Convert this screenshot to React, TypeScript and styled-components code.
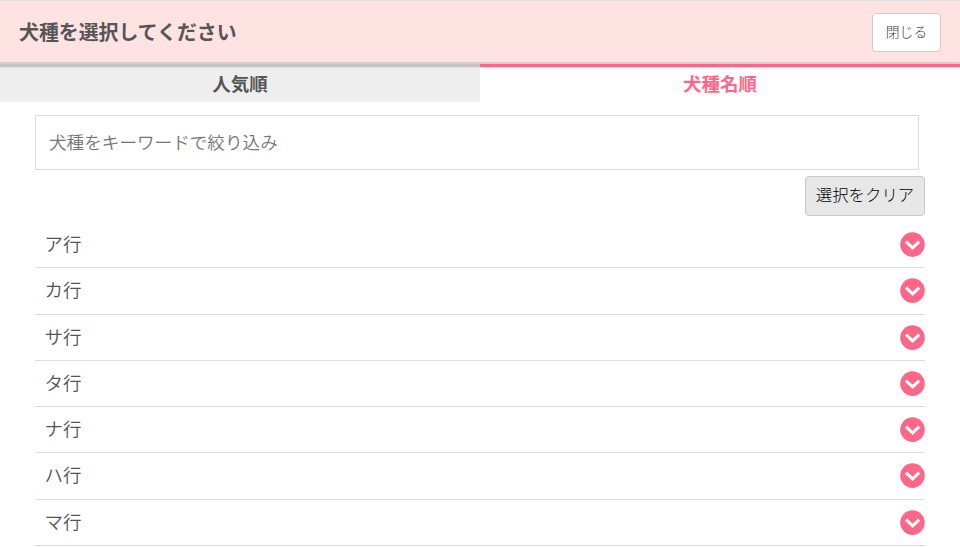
import React from "react";
import styled, { createGlobalStyle } from "styled-components";

const GlobalStyle = createGlobalStyle`
  *, *::before, *::after { box-sizing: border-box; }
  body {
    margin: 0;
    overflow: hidden;
    background: #fff;
    color: #555;
    font-family: "Noto Sans CJK JP", sans-serif;
  }
  button, input { font-family: inherit; margin: 0; }
`;

const Page = styled.div`
  height: 547px;
  overflow: hidden;
  display: flex;
  flex-direction: column;
`;

const Header = styled.header`
  height: 64px;
  flex: none;
  display: flex;
  align-items: center;
  justify-content: space-between;
  padding: 2px 19px 0;
  background: #ffe3e3;
  border-top: 1px solid #e2e2e2;
  border-bottom: 2px solid #d0cccc;
`;

const Title = styled.h1`
  margin: 0;
  padding-bottom: 2px;
  font-size: 19.9px;
  line-height: 28px;
  font-weight: 700;
`;

const CloseButton = styled.button`
  width: 69px;
  height: 39px;
  padding: 0 0 4px;
  border: 1px solid #ccc;
  border-radius: 4px;
  background: #fff;
  color: #444;
  font-size: 13.8px;
  font-weight: 300;
`;

const Tabs = styled.nav`
  display: grid;
  grid-template-columns: 1fr 1fr;
  height: 38px;
  flex: none;
`;

const Tab = styled.button<{ $active?: boolean }>`
  padding: 0 0 4px;
  border: 0;
  border-top: 3px solid ${(p) => (p.$active ? "#ff6688" : "#c5c5c5")};
  background: ${(p) => (p.$active ? "#fff" : "#eee")};
  box-shadow: inset 0 1px ${(p) => (p.$active ? "#fbdbe1" : "#e2e2e2")};
  color: ${(p) => (p.$active ? "#ff6688" : "#555")};
  font-size: 18.5px;
  line-height: 28px;
  font-weight: 700;
`;

const Content = styled.main`
  padding: 13px 35px 0;
  display: flex;
  flex-direction: column;
`;

const SearchInput = styled.input`
  width: 884px;
  height: 55px;
  padding: 0 13px 2px;
  border: 1px solid #ddd;
  border-radius: 0;
  background: #fff;
  font-size: 17.6px;
  font-weight: 350;
  outline: none;
  &::placeholder { color: #757575; opacity: 1; }
`;

const ClearButton = styled.button`
  align-self: flex-end;
  width: 120px;
  height: 40px;
  margin-top: 6px;
  padding: 0 0 4px;
  border: 1px solid #c8c8c8;
  border-radius: 4px;
  background: #e7e7e7;
  color: #000;
  font-size: 16.4px;
  font-weight: 300;
`;

const RowList = styled.ul`
  margin: 6px 0 0;
  padding: 0;
  list-style: none;
`;

const Row = styled.li`
  height: 46.25px;
  display: flex;
  align-items: center;
  justify-content: space-between;
  padding-left: 9.5px;
  border-bottom: 1px solid #ddd;
`;

const RowLabel = styled.span`
  padding-bottom: 3px;
  font-size: 18.5px;
  font-weight: 350;
  line-height: 28px;
`;

const Chevron = styled.svg`
  display: block;
  width: 25px;
  height: 25px;
`;

const rows = ["ア行", "カ行", "サ行", "タ行", "ナ行", "ハ行", "マ行"];

export default function App() {
  return (
    <Page>
      <GlobalStyle />
      <Header>
        <Title>犬種を選択してください</Title>
        <CloseButton>閉じる</CloseButton>
      </Header>
      <Tabs>
        <Tab>人気順</Tab>
        <Tab $active>犬種名順</Tab>
      </Tabs>
      <Content>
        <SearchInput placeholder="犬種をキーワードで絞り込み" />
        <ClearButton>選択をクリア</ClearButton>
        <RowList>
          {rows.map((row) => (
            <Row key={row}>
              <RowLabel>{row}</RowLabel>
              <Chevron viewBox="0 0 25 25" aria-hidden="true">
                <circle cx="12.5" cy="12.6" r="12.3" fill="#ff6688" />
                <path d="M6 9.7 L12.6 15.9 L19.2 9.7" fill="none" stroke="#fff" strokeWidth="3.1" />
              </Chevron>
            </Row>
          ))}
        </RowList>
      </Content>
    </Page>
  );
}
